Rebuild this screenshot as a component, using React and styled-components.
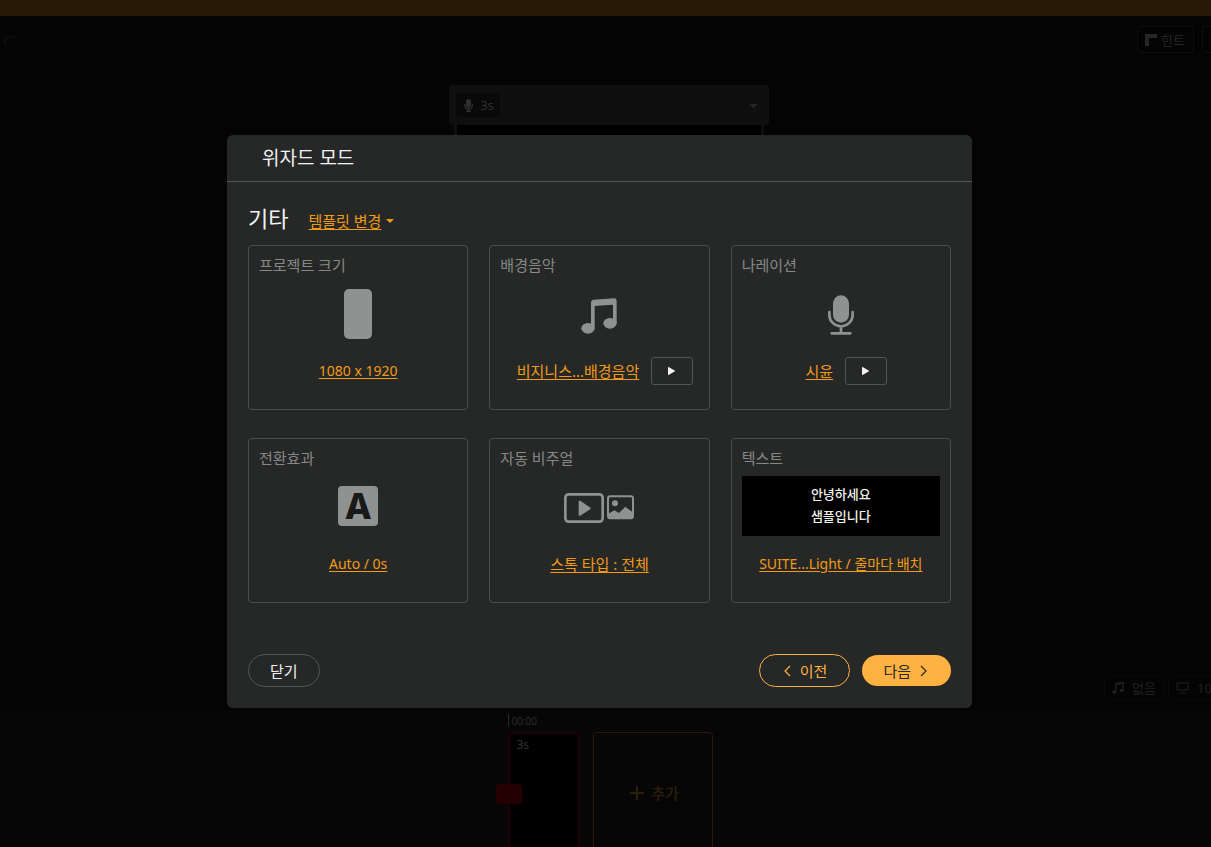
import styled, { createGlobalStyle } from "styled-components";
import { FaMicrophone, FaCaretDown } from "react-icons/fa";

const GlobalStyle = createGlobalStyle`
  * {
    box-sizing: border-box;
  }
  body {
    margin: 0;
    background: #040404;
    font-family: "Noto Sans", "Noto Sans CJK KR", sans-serif;
    font-size: 15px;
    line-height: 20px;
    overflow: hidden;
  }
  button {
    font: inherit;
    color: inherit;
    background: none;
    border: none;
    padding: 0;
    cursor: pointer;
  }
`;

/* editor behind the dialog */

const Editor = styled.div`
  display: flex;
  flex-direction: column;
  min-height: 100vh;
  overflow: hidden;
  color: #262626;
`;

const Notice = styled.div`
  height: 16px;
  background: #261905;
`;

const Toolbar = styled.header`
  display: flex;
  justify-content: space-between;
  align-items: flex-start;
  height: 69px;
  padding-top: 10px;
  margin-right: -32px;
`;

const ToolGroup = styled.div`
  display: flex;
  gap: 8px;
`;

const ToolButton = styled.button`
  display: flex;
  align-items: center;
  justify-content: center;
  gap: 4px;
  width: ${props => props.$width};
  height: 27px;
  padding-right: 2px;
  border: 1px solid #0e0e0e;
  border-radius: 3px;
  font-size: 13px;
`;

const Stage = styled.main`
  flex: 1;
  display: flex;
  flex-direction: column;
  align-items: center;
  padding-left: 7px;
`;

const SceneBar = styled.div`
  display: flex;
  align-items: center;
  justify-content: space-between;
  width: 320px;
  height: 40px;
  padding: 0 9px 0 7px;
  border-radius: 3px;
  background: #0f0f0f;
`;

const SceneTime = styled.div`
  display: flex;
  align-items: center;
  justify-content: center;
  gap: 5px;
  width: 44px;
  height: 24px;
  border-radius: 4px;
  background: #090909;
  color: #303030;
  font-size: 13px;
`;

const SceneView = styled.div`
  flex: 1;
  width: 310px;
  border: solid #0f0f0f;
  border-width: 0 3px;
  background: #000;
`;

const StatusRow = styled.div`
  display: flex;
  align-self: flex-end;
  gap: 4px;
  margin-right: -30px;
  padding: 10px 0 11px;
`;

const Status = styled.div`
  display: flex;
  align-items: center;
  gap: 8px;
  width: ${props => props.$width};
  height: 25px;
  padding-left: 7px;
  border: 1px solid #0a0a0a;
  border-radius: 3px;
  color: #202020;
  font-size: 13px;
`;

const Timeline = styled.footer`
  height: 136px;
  padding: 3px 0 0 calc(50% - 98px);
  background: #060606;
`;

const Ruler = styled.div`
  height: 12px;
  padding-left: 3px;
  border-left: 1px solid #2c2c2c;
  font-size: 10px;
  line-height: 14px;
  color: #2c2c2c;
`;

const Tracks = styled.div`
  display: flex;
  gap: 13px;
  margin-top: 6px;
`;

const Clip = styled.div`
  position: relative;
  width: 72px;
  height: 140px;
  padding: 1px 7px;
  border: 2px solid #1c0206;
  border-radius: 3px;
  background: #000;
  color: #303030;
  font-size: 12px;
`;

const ClipHandle = styled.span`
  position: absolute;
  left: -14px;
  top: 50px;
  width: 26px;
  height: 20px;
  border-radius: 4px;
  background: #240003;
`;

const AddClip = styled.button`
  display: flex;
  align-items: center;
  justify-content: center;
  gap: 7px;
  width: 120px;
  height: 122px;
  padding-left: 4px;
  border: 1px solid #271a08;
  border-radius: 4px;
  color: #2d1e0a;
  font-weight: 500;
`;

/* dialog */

const Overlay = styled.div`
  position: fixed;
  inset: 0;
  display: flex;
  align-items: center;
  justify-content: center;
  padding: 0 12px 4px 0;
`;

const Dialog = styled.section`
  width: 100%;
  max-width: 745px;
  border-radius: 6px;
  background: #262827;
  color: #f2f2f2;
`;

const DialogTitle = styled.h1`
  margin: 0;
  padding: 9px 35px 9px;
  border-bottom: 1px solid #545656;
  font-size: 19px;
  line-height: 28px;
  font-weight: 400;
`;

const DialogBody = styled.div`
  padding: 20px 21px 21px;
`;

const Heading = styled.div`
  display: flex;
  align-items: baseline;
  gap: 20px;
  margin-bottom: 11px;

  h2 {
    margin: 0;
    font-size: 22px;
    line-height: 32px;
    font-weight: 400;
  }
`;

const Link = styled.a`
  color: #f39a15;
  font-size: ${props => props.$size || "15px"};
  text-decoration: underline;
  text-underline-offset: 2px;
  white-space: nowrap;
`;

const TemplateChange = styled.div`
  display: flex;
  align-items: center;
  gap: 5px;
  color: #f39a15;
`;

const Cards = styled.div`
  display: grid;
  grid-template-columns: repeat(3, 1fr);
  gap: 28px 21px;
`;

const CardBox = styled.article`
  padding: 9px 10px 24px;
  border: 1px solid #4c4e4d;
  border-radius: 4px;

  h3 {
    margin: 0;
    color: #868887;
    font-size: 15px;
    line-height: 20px;
    font-weight: 400;
  }
`;

const Visual = styled.div`
  display: flex;
  align-items: center;
  justify-content: center;
  gap: 3px;
  height: 60px;
  margin: 8px 0 14px;
  padding-top: ${props => props.$drop || "0"};
  color: #8f9291;
`;

const Choice = styled.div`
  display: flex;
  align-items: center;
  justify-content: center;
  gap: 12px;
  height: 28px;
  padding-left: ${props => (props.$playable ? "11px" : "0")};
`;

const PlayButton = styled.button`
  display: flex;
  align-items: center;
  justify-content: center;
  width: 42px;
  height: 28px;
  border: 1px solid #545656;
  border-radius: 3px;
  color: #f2f2f2;
`;

const Ratio = styled.div`
  width: 28px;
  height: 50px;
  border-radius: 5px;
  background: #8f9291;
`;

const Letter = styled.div`
  width: 40px;
  height: 40px;
  border-radius: 4px;
  background: #8f9291;
  color: #181a1a;
  font-size: 36px;
  line-height: 40px;
  font-weight: 800;
  text-align: center;
`;

const Sample = styled.p`
  flex: 1;
  margin: 0;
  padding: 7px 0 9px;
  background: #000;
  color: #f2f2ea;
  font-size: 13px;
  line-height: 22px;
  font-weight: 500;
  text-align: center;
`;

const DialogFooter = styled.div`
  display: flex;
  align-items: center;
  gap: 12px;
  margin-top: 51px;
`;

const PillButton = styled.button`
  display: flex;
  align-items: center;
  justify-content: center;
  gap: 9px;
  height: 33px;
  padding: 0 21px;
  border: 1px solid #545656;
  border-radius: 17px;
`;

const PrevButton = styled(PillButton)`
  margin-left: auto;
  padding: 0 22px 0 24px;
  border-color: #ffb142;
  color: #ffb142;
`;

const NextButton = styled(PillButton)`
  height: 31px;
  border: none;
  padding: 0 24px 0 21px;
  background: #ffb142;
  color: #262827;
`;

function NoteIcon({ size = 36 }) {
  return (
    <svg width={size} height={size} viewBox="0 0 108 108" fill="currentColor">
      <path d="M30 90V14q0-8 8-9l62-4q7 0 7 7v67h-11V20l-55 4v66z" />
      <ellipse cx="21" cy="91" rx="20" ry="16" />
      <ellipse cx="87" cy="76" rx="20" ry="16" />
    </svg>
  );
}

function MicIcon() {
  return (
    <svg width="26" height="40" viewBox="0 0 78 120" fill="none">
      <rect x="15" y="1" width="48" height="82" rx="24" fill="currentColor" />
      <path d="M4 51v8a35 35 0 0 0 70 0v-8M39 94v20M11 115h56" stroke="currentColor" strokeWidth="8" strokeLinecap="round" />
    </svg>
  );
}

function VideoIcon() {
  return (
    <svg width="40" height="30" viewBox="0 0 120 90" fill="none">
      <rect x="4" y="4" width="112" height="82" rx="10" stroke="currentColor" strokeWidth="8" />
      <path d="M47 26l30 20-30 20z" fill="currentColor" stroke="currentColor" strokeWidth="6" strokeLinejoin="round" />
    </svg>
  );
}

function PictureIcon() {
  return (
    <svg width="27" height="27" viewBox="0 0 81 81" fill="none">
      <rect x="3" y="4" width="75" height="66" rx="7" stroke="currentColor" strokeWidth="6" />
      <circle cx="24" cy="25" r="9" fill="currentColor" />
      <path d="M4 56l18-10 14 8 19-19 22 17v19H4z" fill="currentColor" />
    </svg>
  );
}

function PlayIcon() {
  return (
    <svg width="8" height="8" viewBox="0 0 8 8" fill="currentColor">
      <path d="M0 0.400q0-.6.6-.3l6 3.400q.6.5 0 1L.600 7.900Q0 8.200 0 7.600z" />
    </svg>
  );
}

function Chevron({ d }) {
  return (
    <svg width="7" height="12" viewBox="0 0 7 12" fill="none" stroke="currentColor" strokeWidth="1.200">
      <path d={d} />
    </svg>
  );
}

function Card({ title, visual, drop, value, size, playable }) {
  return (
    <CardBox>
      <h3>{title}</h3>
      <Visual $drop={drop}>{visual}</Visual>
      <Choice $playable={playable}>
        <Link href="#" $size={size}>{value}</Link>
        {playable && (
          <PlayButton type="button" aria-label={title}>
            <PlayIcon />
          </PlayButton>
        )}
      </Choice>
    </CardBox>
  );
}

const cards = [
  { title: "프로젝트 크기", visual: <Ratio />, drop: "2px", value: "1080 x 1920", size: "14px" },
  { title: "배경음악", visual: <NoteIcon />, drop: "6px", value: "비지니스...배경음악", playable: true },
  { title: "나레이션", visual: <MicIcon />, drop: "4px", value: "시윤", playable: true },
  { title: "전환효과", visual: <Letter>A</Letter>, value: "Auto / 0s", size: "14px" },
  { title: "자동 비주얼", visual: <><VideoIcon /><PictureIcon /></>, drop: "4px", value: "스톡 타입 : 전체" },
  { title: "텍스트", visual: <Sample>안녕하세요<br />샘플입니다</Sample>, value: "SUITE...Light / 줄마다 배치", size: "14px" },
];

function Background() {
  return (
    <Editor>
      <Notice />
      <Toolbar>
        <svg width="18" height="28" viewBox="0 0 18 28" fill="none" stroke="#0b0b0b" strokeWidth="3">
          <path d="M5 19v-5q0-3 4-3h7" />
        </svg>
        <ToolGroup>
          <ToolButton type="button" $width="57px">
            <svg width="13" height="13" viewBox="0 0 13 13" fill="none" stroke="currentColor" strokeWidth="4">
              <path d="M3 13V3h10" />
            </svg>
            힌트
          </ToolButton>
          <ToolButton type="button" $width="41px" />
        </ToolGroup>
      </Toolbar>
      <Stage>
        <SceneBar>
          <SceneTime>
            <FaMicrophone size={13} />
            3s
          </SceneTime>
          <FaCaretDown size={13} />
        </SceneBar>
        <SceneView />
        <StatusRow>
          <Status $width="60px">
            <NoteIcon size={12} />
            없음
          </Status>
          <Status $width="73px">
            <svg width="13" height="12" viewBox="0 0 13 12" fill="none" stroke="currentColor">
              <path d="M1 1h11v7H1zM4 11h5" />
            </svg>
            1080
          </Status>
        </StatusRow>
      </Stage>
      <Timeline>
        <Ruler>00:00</Ruler>
        <Tracks>
          <Clip>
            3s
            <ClipHandle />
          </Clip>
          <AddClip type="button">
            <svg width="14" height="14" viewBox="0 0 14 14" stroke="currentColor" strokeWidth="2">
              <path d="M7 0v14M0 7h14" />
            </svg>
            추가
          </AddClip>
        </Tracks>
      </Timeline>
    </Editor>
  );
}

function App() {
  return (
    <>
      <GlobalStyle />
      <Background />
      <Overlay>
        <Dialog role="dialog" aria-labelledby="wizard-title">
          <DialogTitle id="wizard-title">위자드 모드</DialogTitle>
          <DialogBody>
            <Heading>
              <h2>기타</h2>
              <TemplateChange>
                <Link href="#">템플릿 변경</Link>
                <svg width="8" height="4" viewBox="0 0 8 4" fill="currentColor">
                  <path d="M0 0h8L4 4z" />
                </svg>
              </TemplateChange>
            </Heading>
            <Cards>
              {cards.map((card) => (
                <Card key={card.title} {...card} />
              ))}
            </Cards>
            <DialogFooter>
              <PillButton type="button">닫기</PillButton>
              <PrevButton type="button">
                <Chevron d="M6 1L1 6l5 5" />
                이전
              </PrevButton>
              <NextButton type="button">
                다음
                <Chevron d="M1 1l5 5-5 5" />
              </NextButton>
            </DialogFooter>
          </DialogBody>
        </Dialog>
      </Overlay>
    </>
  );
}

export default App;
